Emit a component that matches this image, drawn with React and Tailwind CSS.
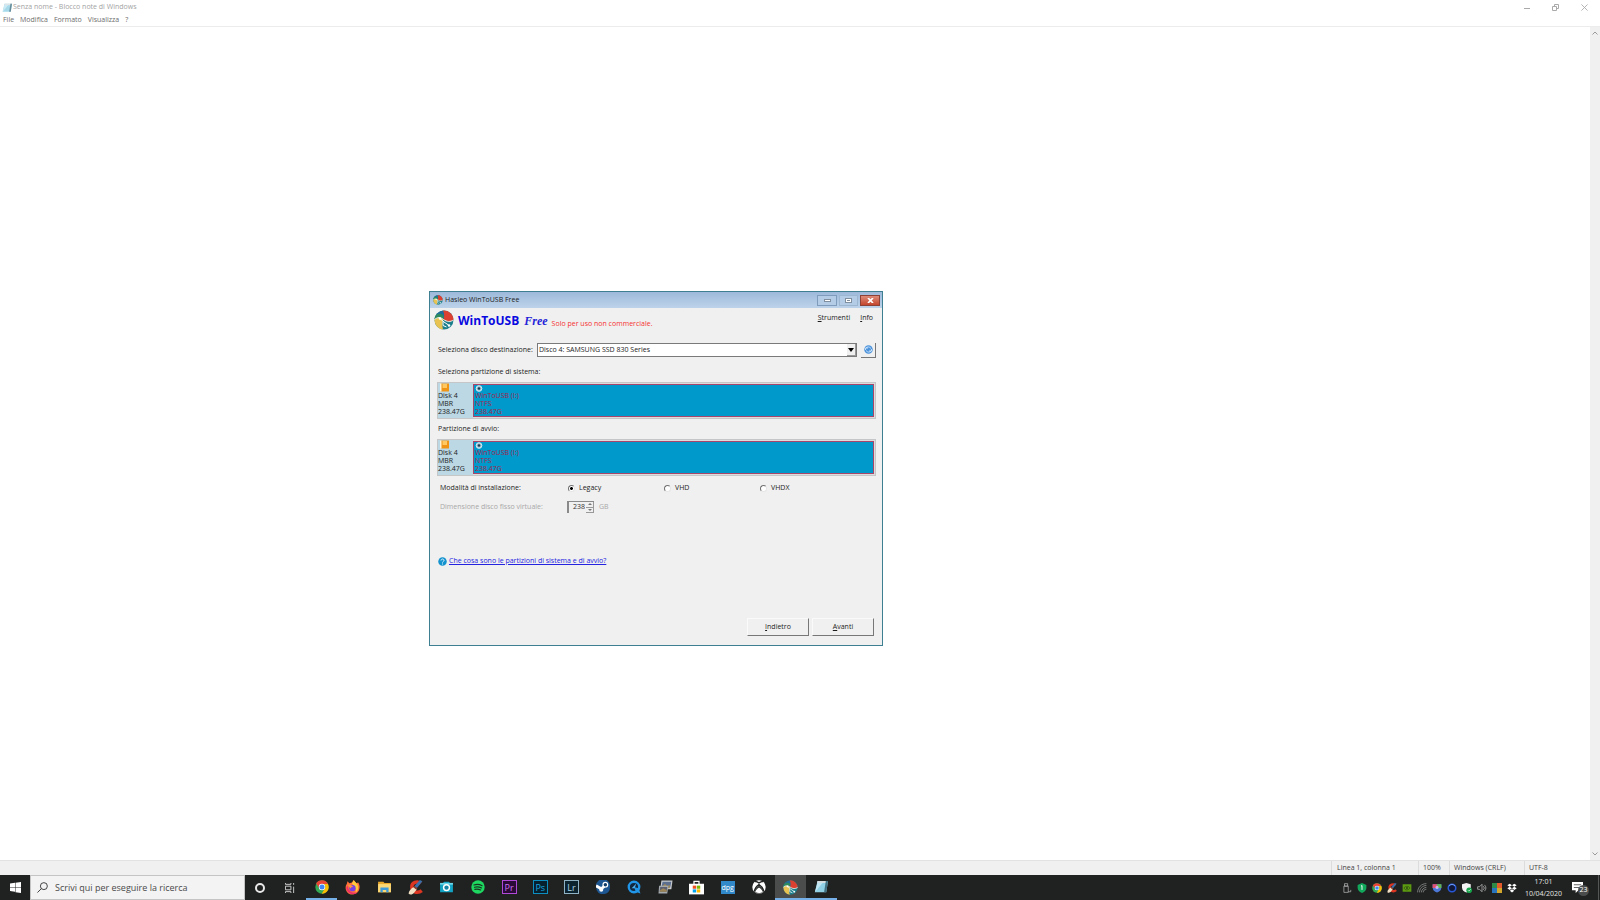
import React, { useState } from 'react';

const NotepadIcon = ({ className }) => (
  <svg viewBox="0 0 16 16" className={className} aria-hidden="true">
    <path d="M4 1h12l-2 13H1z" fill="#8fd0e6" />
    <path d="M4 1h12l-.5 2.500h-12z" fill="#d5dde0" />
    <path d="M16 1l-2 13h-2.500l2-13z" fill="#3f6f80" />
    <path d="M1 14l9-11H4z" fill="#bfe6f2" />
  </svg>
);

const WinToUsbIcon = ({ className }) => (
  <svg viewBox="0 0 40 40" className={className} aria-hidden="true">
    <circle cx="20" cy="20" r="19" fill="#1d7f8c" />
    <path d="M18 1A19 19 0 0 0 1 19c6-5 12-5 18 0 2-6 2-12-1-18z" fill="#1f6c9c" />
    <path d="M5 9c6-3 11-2 14 2v8C13 14 7 14 1 19c0-4 1-7 4-10z" fill="#2e8a5e" />
    <path d="M18 1c3 6 3 12 1 18 7 5 14 5 20 1A19 19 0 0 0 18 1z" fill="#db4030" />
    <path d="M1 19c6-5 12-5 18 0-3 6-3 12-1 20A19 19 0 0 1 1 19z" fill="#e9c352" />
    <path d="M1 19c6-5 12-5 18 0 7 5 14 5 20 1" stroke="#f3f3ea" strokeWidth="2" fill="none" />
    <path d="M12 17l8 7 9 6M18 23v8l7 3" stroke="#fff" strokeWidth="2" fill="none" />
    <circle cx="12" cy="17" r="2.500" fill="#fff" />
    <circle cx="30" cy="31" r="2.500" fill="#fff" />
  </svg>
);

const ChromeIcon = ({ className }) => (
  <svg viewBox="0 0 24 24" className={className} aria-hidden="true">
    <circle cx="12" cy="12" r="11.500" fill="#34a853" />
    <path d="M2 6.200A11.500 11.500 0 0 1 22.300 7H12a5 5 0 0 0-4.600 7z" fill="#ea4335" />
    <path d="M22.300 7A11.500 11.500 0 0 1 11.500 23.500l5-8.500A5.500 5.500 0 0 0 15 7z" fill="#fbbc05" />
    <circle cx="12" cy="12" r="5.500" fill="#fff" />
    <circle cx="12" cy="12" r="4.300" fill="#4285f4" />
  </svg>
);

const FirefoxIcon = ({ className }) => (
  <svg viewBox="0 0 24 24" className={className} aria-hidden="true">
    <path d="M3 6l1-4 3 3 4-1 3-4c1 3 3 3 4 5l3-1c3 4 3 9 1 13-3 6-12 8-17 4C0 17 0 10 3 6z" fill="#ff7139" />
    <path d="M14 0c1 3 6 5 7 10 1 4-1 8-4 10 1-5 0-10-6-14z" fill="#ffc93c" />
    <path d="M2 12c0 9 11 14 18 8-5 1-14 1-16-11z" fill="#ee2f69" />
    <circle cx="12" cy="13" r="5" fill="#7542e5" />
    <path d="M5 8c4-1 6 1 8 3-3 0-4 1-4 3z" fill="#ff9640" />
  </svg>
);

const FolderIcon = ({ className }) => (
  <svg viewBox="0 0 24 24" className={className} aria-hidden="true">
    <path d="M1 3h9l2 2h11v16H1z" fill="#e8a92c" />
    <path d="M1 7h22v14H1z" fill="#fbd877" />
    <path d="M5 21v-8h14v8h-4v-4H9v4z" fill="#3d9bdc" />
  </svg>
);

const CCleanerIcon = ({ className }) => (
  <svg viewBox="0 0 24 24" className={className} aria-hidden="true">
    <path d="M20 5.500C15 1 6 4 6 11c0 9 10 11 16 6" stroke="#dc3522" strokeWidth="5.500" fill="none" />
    <path d="M19 0l4 2-9 11-4-3z" fill="#3a6ea8" />
    <path d="M9 11l5 4-4 5c-3 4-7 4-9 2 0-4 3-8 8-11z" fill="#f1dfc4" />
    <path d="M10 9l5 4-1.500 2.500-5-4z" fill="#8a3b2c" />
  </svg>
);

const CameraIcon = ({ className }) => (
  <svg viewBox="0 0 24 24" className={className} aria-hidden="true">
    <path d="M1 5h5l2-2h8l2 2h5v16H1z" fill="#13a3c4" />
    <path d="M1 5h22v3H1z" fill="#6fd6ea" />
    <circle cx="12" cy="13" r="5" fill="#1483a5" stroke="#fff" strokeWidth="2.500" />
  </svg>
);

const SpotifyIcon = ({ className }) => (
  <svg viewBox="0 0 24 24" className={className} aria-hidden="true">
    <circle cx="12" cy="12" r="11.500" fill="#1ed760" />
    <path d="M5 8.500c5-1.500 10-1 14 1.200M6 12.500c4-1.200 8-.8 12 1.200M6.500 16c4-1 7-.5 10 1" stroke="#17341f" strokeWidth="2" fill="none" strokeLinecap="round" />
  </svg>
);

const AdobeIcon = ({ label, className }) => (
  <span className={`flex h-[14px] w-[15px] items-center justify-center border text-[9px] leading-none ${className}`}>{label}</span>
);

const SteamIcon = ({ className }) => (
  <svg viewBox="0 0 24 24" className={className} aria-hidden="true">
    <path d="M0 9A12 12 0 0 1 24 12 12 12 0 0 1 1 17z" fill="#1d5690" />
    <path d="M0 10l9 5 6-5" stroke="#fff" strokeWidth="5" fill="none" />
    <circle cx="16" cy="8" r="4" fill="#123c68" stroke="#fff" strokeWidth="2" />
    <circle cx="9" cy="16.500" r="3.500" fill="#fff" />
  </svg>
);

const QuickTimeIcon = ({ className }) => (
  <svg viewBox="0 0 24 24" className={className} aria-hidden="true">
    <circle cx="12" cy="12" r="9" fill="#12283e" stroke="#2196e8" strokeWidth="4" />
    <path d="M12 12l8 2 3 9-8-3z" fill="#2196e8" />
    <path d="M8 14l8-8-3 8z" fill="#4db4f5" />
  </svg>
);

const PhotosIcon = ({ className }) => (
  <svg viewBox="0 0 24 24" className={className} aria-hidden="true">
    <path d="M5 1h19l-2 15H3z" fill="#c8ccd0" />
    <path d="M7 3h15l-2 10H5z" fill="#5c6f8f" />
    <path d="M6 11l5-4 4 3 5-1-1 5H5z" fill="#a08a58" />
    <path d="M1 10h16l-2 13H0z" fill="#a3a8ad" />
    <path d="M3 12h12l-1 8H2z" fill="#5b5f70" />
    <path d="M3 17l5-3 6 3v3H2z" fill="#9b8455" />
  </svg>
);

const StoreIcon = ({ className }) => (
  <svg viewBox="0 0 24 24" className={className} aria-hidden="true">
    <path d="M8 7V2h8v5" stroke="#fff" strokeWidth="2" fill="none" />
    <path d="M0 6h24v17H0z" fill="#fff" />
    <path d="M6 9h5.500v5H6z" fill="#f25022" />
    <path d="M12.500 9H18v5h-5.500z" fill="#7fba00" />
    <path d="M6 15h5.500v5H6z" fill="#00a4ef" />
    <path d="M12.500 15H18v5h-5.500z" fill="#ffb900" />
  </svg>
);

const DpgIcon = () => (
  <span className="flex h-[13px] w-[14px] items-center justify-center overflow-hidden bg-[#3189c9] text-[7px] leading-none text-white">dpg</span>
);

const XboxIcon = ({ className }) => (
  <svg viewBox="0 0 24 24" className={className} aria-hidden="true">
    <circle cx="12" cy="12" r="11.500" fill="#fff" />
    <path d="M5 2.500c3-.5 5 1 7 2.500 2-1.500 4-3 7-2.500M4 20C5 14 9 10 12 8c3 2 7 6 8 12" stroke="#202221" strokeWidth="2.500" fill="none" />
    <path d="M4.500 20C6 15 9 12 12 10c3 2 6 5 7.500 10-4 4-11 4-15 0z" fill="#202221" />
    <path d="M5.500 20c2-3 4-6 6.500-7 2.500 1 4.500 4 6.500 7-4 3.300-9 3.300-13 0z" fill="#fff" />
  </svg>
);

const WindowsIcon = ({ className }) => (
  <svg viewBox="0 0 22 22" className={className} aria-hidden="true">
    <path d="M0 3l10-1.500V10H0zM11 1.300L22 0v10H11zM0 11h10v8.500L0 18zM11 11h11v11l-11-1.500z" fill="#fff" />
  </svg>
);

const taskbarApps = [
  { name: 'Google Chrome', icon: <ChromeIcon className="h-[14px] w-[14px]" />, state: 'open' },
  { name: 'Firefox', icon: <FirefoxIcon className="h-[15px] w-[15px]" /> },
  { name: 'Esplora file', icon: <FolderIcon className="h-[14px] w-[15px]" /> },
  { name: 'CCleaner', icon: <CCleanerIcon className="h-[15px] w-[15px]" /> },
  { name: 'Fotocamera', icon: <CameraIcon className="h-[14px] w-[15px]" /> },
  { name: 'Spotify', icon: <SpotifyIcon className="h-[14px] w-[14px]" /> },
  { name: 'Premiere Pro', icon: <AdobeIcon label="Pr" className="border-[#b048d8] bg-[#2a0a36] text-[#d070f5]" /> },
  { name: 'Photoshop', icon: <AdobeIcon label="Ps" className="border-[#0c8fc0] bg-[#06202e] text-[#18a8e0]" /> },
  { name: 'Lightroom', icon: <AdobeIcon label="Lr" className="border-[#8fb2c4] bg-[#0c2430] text-[#b0d4e8]" /> },
  { name: 'Steam', icon: <SteamIcon className="h-[14px] w-[14px]" /> },
  { name: 'QuickTime', icon: <QuickTimeIcon className="h-[14px] w-[14px]" /> },
  { name: 'Foto', icon: <PhotosIcon className="h-[14px] w-[15px]" /> },
  { name: 'Microsoft Store', icon: <StoreIcon className="h-[15px] w-[15px]" /> },
  { name: 'DPG', icon: <DpgIcon /> },
  { name: 'Xbox', icon: <XboxIcon className="h-[14px] w-[14px]" /> },
  { name: 'WinToUSB', icon: <WinToUsbIcon className="h-[15px] w-[15px]" />, state: 'active' },
  { name: 'Blocco note', icon: <NotepadIcon className="h-[14px] w-[14px]" />, state: 'open' },
];

const appStates = {
  open: 'border-[#76b0e8]',
  active: 'border-[#76b0e8] bg-[#4b4d4c]',
};

const trayIcons = [
  { name: 'Rimozione hardware', art: <path d="M4 1h5v4H4zM3 5h7v10H3zM10 14h4v-3" stroke="#c9c9c9" fill="none" /> },
  { name: 'Sicurezza', art: <><path d="M8 0l7 3v5c0 4-4 7-7 8-3-1-7-4-7-8V3z" fill="#12a85c" /><path d="M6.500 5L8 4v7" stroke="#fff" strokeWidth="1.500" fill="none" /></> },
  { name: 'Chrome', art: <ChromeIcon /> },
  { name: 'CCleaner', art: <CCleanerIcon /> },
  { name: 'NVIDIA', art: <><path d="M1 2h14v12H1z" fill="#5d9c12" /><path d="M3 8c3-4 8-3 10 0-3 4-8 4-10 0z" stroke="#294010" fill="none" /><circle cx="8" cy="8" r="1.500" fill="#294010" /></> },
  { name: 'Rete', art: <path d="M1 15C1 7 7 1 15 1M4 15C4 9 9 4 15 4M7 15c0-4 4-8 8-8M10 15c0-3 2-5 5-5" stroke="#a9abaa" fill="none" /> },
  { name: 'Protezione', art: <><path d="M1 2h14v5c0 4-3 7-7 8-4-1-7-4-7-8z" fill="#4c78d8" /><path d="M1 2h7v6H1z" fill="#e34f6f" /><path d="M8 2h7v6H8z" fill="#65b84e" /><circle cx="8" cy="7" r="2.500" fill="#c9b7f0" /></> },
  { name: 'Cortana', art: <><circle cx="8" cy="8" r="6" stroke="#2857d8" strokeWidth="2.500" fill="#10183a" /><path d="M3 5a6 6 0 0 1 10 0" stroke="#6f9df5" strokeWidth="1.500" fill="none" /></> },
  { name: 'Windows Defender', art: <><path d="M7 0l7 2v5c0 4-3 7-7 8-4-1-7-4-7-8V2z" fill="#f3f3f3" /><circle cx="11.500" cy="11.500" r="4.500" fill="#16a34a" /><path d="M9.500 11.500l1.500 1.500 3-3" stroke="#fff" fill="none" /></> },
  { name: 'Volume', art: <><path d="M1 6h3l4-4v12l-4-4H1z" stroke="#d5d5d5" fill="none" /><path d="M10 5c2 2 2 4 0 6M12 3c3 3 3 7 0 10" stroke="#d5d5d5" fill="none" /></> },
  { name: 'Office', art: <><path d="M0 0h8v8H0z" fill="#2f8a48" /><path d="M8 0h8v8H8z" fill="#e55a2a" /><path d="M0 8h8v8H0z" fill="#2874bd" /><path d="M8 8h8v8H8z" fill="#d3a72c" /></> },
  { name: 'Dropbox', art: <path d="M4.300 1L8 3.500 4.300 6 .5 3.500zM11.700 1l3.800 2.500L11.700 6 8 3.500zM4.300 6L8 8.500 4.300 11 .5 8.500zM11.700 6l3.800 2.500-3.800 2.500L8 8.500zM8 10l3.500 2.500L8 15l-3.500-2.500z" fill="#fff" /> },
];

const Notepad = () => (
  <main className="flex min-h-0 flex-1 flex-col bg-white text-[7px]">
    <header className="border-b border-[#ececec]">
      <div className="flex h-[15px] items-center text-[#a3a3a3]">
        <NotepadIcon className="ml-[2px] h-[10px] w-[10px] opacity-80" />
        <h1 className="ml-px flex-1">Senza nome - Blocco note di Windows</h1>
        <div className="mr-px flex text-[#aaaaaa]">
          <button aria-label="Riduci a icona" className="flex h-[14px] w-[29px] items-center justify-center">
            <svg viewBox="0 0 6 6" className="h-[6px] w-[6px]"><path d="M0 3.500h6" stroke="currentColor" /></svg>
          </button>
          <button aria-label="Ripristina" className="flex h-[14px] w-[29px] items-center justify-center">
            <svg viewBox="0 0 7 7" className="h-[7px] w-[7px]"><path d="M.5 2.500h4v4h-4zM2.500 2V.5h4v4H5" stroke="currentColor" fill="none" /></svg>
          </button>
          <button aria-label="Chiudi" className="flex h-[14px] w-[29px] items-center justify-center">
            <svg viewBox="0 0 8 8" className="h-[7px] w-[7px]"><path d="M.5.5l7 7M7.500.5l-7 7" stroke="currentColor" /></svg>
          </button>
        </div>
      </div>
      <nav className="flex h-[11px] items-center gap-[6px] pl-[3px] text-[#6d6d6d]">
        <button>File</button>
        <button>Modifica</button>
        <button>Formato</button>
        <button>Visualizza</button>
        <button>?</button>
      </nav>
    </header>
    <div className="flex min-h-0 flex-1">
      <textarea aria-label="Documento" className="flex-1 resize-none outline-none" />
      <div className="flex w-[10px] flex-col items-center justify-between bg-[#f0f0f0] py-[4px] text-[#9a9a9a]">
        <svg viewBox="0 0 6 4" className="h-[4px] w-[6px]"><path d="M.5 3.500L3 1l2.500 2.500" stroke="currentColor" fill="none" /></svg>
        <svg viewBox="0 0 6 4" className="h-[4px] w-[6px]"><path d="M.5.5L3 3 5.500.5" stroke="currentColor" fill="none" /></svg>
      </div>
    </div>
    <footer className="flex h-[15px] justify-end border-t border-[#e2e2e2] bg-[#f0f0f0] text-[#444444]">
      <span className="flex w-[87px] items-center border-l border-[#dcdcdc] pl-[5px]">Linea 1, colonna 1</span>
      <span className="flex w-[31px] items-center border-l border-[#dcdcdc] pl-[4px]">100%</span>
      <span className="flex w-[75px] items-center border-l border-[#dcdcdc] pl-[4px]">Windows (CRLF)</span>
      <span className="flex w-[76px] items-center border-l border-[#dcdcdc] pl-[4px]">UTF-8</span>
    </footer>
  </main>
);

const PartitionBar = () => (
  <div className="flex h-[37px] border border-[#c4c6c8] bg-[#dcdcdc] leading-[8px]">
    <div className="w-[35px] bg-[#bcd8e4]">
      <svg viewBox="0 0 18 18" className="ml-[2px] h-[9px] w-[9px]" aria-hidden="true">
        <path d="M1 1h17v16H1z" fill="#ef9414" />
        <path d="M5 2h9v8H5z" fill="#ffc861" />
        <path d="M0 1h3v16H0z" fill="#fff3d8" />
      </svg>
      <p>Disk 4<br />MBR<br />238.47G</p>
    </div>
    <div className="my-px mr-px flex-1 border border-[#a8456a] bg-[#0099cc] text-[#a4244a]">
      <svg viewBox="0 0 16 16" className="ml-px h-[7px] w-[8px]" aria-hidden="true">
        <circle cx="8" cy="8" r="6.500" fill="#9cc6da" stroke="#e5eef2" strokeWidth="2" />
        <circle cx="8" cy="8" r="3" fill="#1c3c50" />
      </svg>
      <p className="pl-px">WinToUSB (I:)<br />NTFS<br />238.47G</p>
    </div>
  </div>
);

const modes = ['Legacy', 'VHD', 'VHDX'];

const WinToUsbDialog = () => {
  const [mode, setMode] = useState('Legacy');
  const [size, setSize] = useState(238);

  return (
    <section className="absolute left-[429px] top-[291px] w-[454px] border border-[#3f7f92] bg-[#f0f0f0] text-[7px] text-[#1c1c1c]">
      <div className="flex h-[16px] items-center bg-linear-to-b from-[#9db9da] to-[#bdd3ea] pl-[3px] pr-[2px]">
        <WinToUsbIcon className="h-[10px] w-[10px]" />
        <h2 className="ml-[2px] flex-1">Hasleo WinToUSB Free</h2>
        <button aria-label="Riduci a icona" className="flex h-[11px] w-[20px] items-center justify-center border border-[#7f9cbd] bg-[#b5cce6]">
          <span className="h-[3px] w-[7px] border border-[#7f8fa0] bg-white" />
        </button>
        <button aria-label="Ingrandisci" className="ml-[2px] flex h-[11px] w-[19px] items-center justify-center border border-[#9db6d2] bg-[#b5cce6]">
          <span className="flex h-[5px] w-[7px] items-center justify-center border border-[#7f8fa0] bg-white">
            <span className="h-px w-[3px] bg-[#7f8fa0]" />
          </span>
        </button>
        <button aria-label="Chiudi" className="ml-[2px] flex h-[11px] w-[20px] items-center justify-center border border-[#8d4237] bg-linear-to-b from-[#dd8a78] to-[#c4452c] text-white">
          <svg viewBox="0 0 8 6" className="h-[5px] w-[7px]"><path d="M1 0l6 6M7 0L1 6" stroke="currentColor" strokeWidth="2" /></svg>
        </button>
      </div>
      <div className="pb-[9px] pl-[7px] pr-[6px]">
        <div className="-ml-[3px] flex h-[26px] items-center">
          <WinToUsbIcon className="mb-[2px] h-[20px] w-[20px]" />
          <strong className="ml-[4px] text-[12px] leading-none text-[#0808e0]">WinToUSB</strong>
          <em className="ml-[5px] font-['Liberation_Serif',serif] text-[12px] font-bold leading-none text-[#2424d8]">Free</em>
          <span className="ml-[4px] mt-[6px] flex-1 text-[#f53030]">Solo per uso non commerciale.</span>
          <nav className="mb-[6px] mr-[3px] flex gap-[10px]">
            <button><u>S</u>trumenti</button>
            <button><u>I</u>nfo</button>
          </nav>
        </div>
        <div className="mt-[8px] flex h-[16px] items-center pl-px">
          <label htmlFor="disk" className="w-[99px]">Seleziona disco destinazione:</label>
          <div className="flex h-[14px] flex-1 border border-[#7a7a7a] bg-white">
            <select id="disk" className="flex-1 appearance-none pl-px outline-none">
              <option>Disco 4: SAMSUNG SSD 830 Series</option>
            </select>
            <span className="pointer-events-none flex w-[9px] items-center justify-center border-b border-r border-[#9a9a9a] bg-[#f0f0f0]">
              <svg viewBox="0 0 6 4" className="h-[4px] w-[6px]"><path d="M0 0h6L3 4z" fill="#000" /></svg>
            </span>
          </div>
          <button aria-label="Aggiorna" className="ml-[4px] flex h-[15px] w-[15px] items-center justify-center border-b border-r border-[#777777]">
            <svg viewBox="0 0 18 18" className="h-[9px] w-[9px]">
              <circle cx="9" cy="9" r="8.500" fill="#4c93dc" />
              <path d="M3 10V6h5M15 8v4h-5M4 6c3-3 7-3 10 1M14 12c-3 3-7 3-10-1" stroke="#e4f1ff" strokeWidth="1.500" fill="none" />
            </svg>
          </button>
        </div>
        <h3 className="mt-[9px] pl-px leading-[10px]">Seleziona partizione di sistema:</h3>
        <div className="mt-[5px]"><PartitionBar /></div>
        <h3 className="mt-[5px] pl-px leading-[10px]">Partizione di avvio:</h3>
        <div className="mt-[5px]"><PartitionBar /></div>
        <fieldset className="mt-[7px] flex h-[10px] items-center pl-[3px]">
          <legend className="float-left w-[128px]">Modalità di installazione:</legend>
          {modes.map((m) => (
            <label key={m} className="flex w-[96px] items-center gap-[4px]">
              <input
                type="radio"
                name="mode"
                value={m}
                checked={mode === m}
                onChange={() => setMode(m)}
                className="h-[7px] w-[7px] appearance-none rounded-full border border-b-[#e6e6e6] border-l-[#707070] border-r-[#e6e6e6] border-t-[#707070] bg-white checked:bg-[radial-gradient(#000_0_35%,#fff_45%)]"
              />
              {m}
            </label>
          ))}
        </fieldset>
        <div className="mt-[7px] flex h-[14px] items-center pl-[3px] text-[#a8a8a8]">
          <label htmlFor="size" className="w-[127px]">Dimensione disco fisso virtuale:</label>
          <div className="flex h-[12px] w-[27px] border-l-2 border-t border-[#8a8a8a] text-[#333333]">
            <input
              id="size"
              type="number"
              value={size}
              onChange={(e) => setSize(Number(e.target.value))}
              className="w-[17px] appearance-none pr-px text-right outline-none [&::-webkit-inner-spin-button]:hidden"
            />
            <div className="flex flex-1 flex-col">
              <button aria-label="Aumenta" onClick={() => setSize(size + 1)} className="flex flex-1 items-center justify-center border-b border-r border-[#999999]">
                <svg viewBox="0 0 4 2" className="h-[2px] w-[4px]"><path d="M0 2h4L2 0z" fill="#777" /></svg>
              </button>
              <button aria-label="Diminuisci" onClick={() => setSize(size - 1)} className="flex flex-1 items-center justify-center border-b border-r border-[#999999]">
                <svg viewBox="0 0 4 2" className="h-[2px] w-[4px]"><path d="M0 0h4L2 2z" fill="#777" /></svg>
              </button>
            </div>
          </div>
          <span className="ml-[5px]">GB</span>
        </div>
        <div className="mt-[42px] flex h-[10px] items-center gap-[2px] pl-px">
          <svg viewBox="0 0 18 18" className="h-[9px] w-[9px]" aria-hidden="true">
            <circle cx="9" cy="9" r="8.500" fill="#1593cf" />
            <path d="M6 7c0-4 6-4 6 0 0 2-3 2-3 4M9 13v2" stroke="#e4f6ff" strokeWidth="2" fill="none" />
          </svg>
          <a href="#partizioni" className="text-[#2424e0] underline">Che cosa sono le partizioni di sistema e di avvio?</a>
        </div>
        <div className="mt-[52px] flex justify-end gap-[3px] pr-[2px]">
          <button className="h-[18px] w-[62px] border border-b-[#777777] border-l-[#fafafa] border-r-[#777777] border-t-[#fafafa]"><u>I</u>ndietro</button>
          <button className="h-[18px] w-[62px] border border-b-[#777777] border-l-[#fafafa] border-r-[#777777] border-t-[#fafafa]"><u>A</u>vanti</button>
        </div>
      </div>
    </section>
  );
};

const Taskbar = () => (
  <footer className="flex h-[25px] bg-[#202221] text-white">
    <button aria-label="Start" className="flex w-[30px] items-center justify-center">
      <WindowsIcon className="h-[11px] w-[11px]" />
    </button>
    <label className="flex w-[215px] items-center border border-[#c4c4c4] bg-[#f3f3f3] pl-[6px]">
      <svg viewBox="0 0 12 12" className="h-[11px] w-[11px]" aria-hidden="true">
        <circle cx="7.500" cy="4.500" r="3.800" stroke="#333" fill="none" />
        <path d="M4.700 7.300L.5 11.500" stroke="#333" />
      </svg>
      <input type="text" aria-label="Cerca" placeholder="Scrivi qui per eseguire la ricerca" className="ml-[7px] flex-1 text-[9px] outline-none placeholder:text-[#4a4a4a]" />
    </label>
    <button aria-label="Cortana" className="flex w-[30px] items-center justify-center">
      <span className="h-[10px] w-[10px] rounded-full border-2 border-[#e8e8e8]" />
    </button>
    <button aria-label="Visualizzazione attività" className="flex w-[30px] items-center justify-center">
      <svg viewBox="0 0 11 11" className="h-[10px] w-[10px]"><path d="M.5 0v1.500h6V0M.5 3.500h6v4h-6zM.5 11V9.500h6V11M9.500 0v2M9.500 4v7" stroke="#d5d5d5" fill="none" /></svg>
    </button>
    <nav className="ml-px flex w-[531px]">
      {taskbarApps.map((app) => (
        <button key={app.name} aria-label={app.name} className={`flex flex-1 items-center justify-center border-b-2 pt-px ${appStates[app.state] || 'border-transparent'}`}>
          {app.icon}
        </button>
      ))}
    </nav>
    <div className="ml-auto flex items-center">
      {trayIcons.map((item) => (
        <button key={item.name} aria-label={item.name} className="flex w-[15px] justify-center">
          <svg viewBox="0 0 16 16" className="h-[10px] w-[10px]">{item.art}</svg>
        </button>
      ))}
      <time className="w-[49px] text-center text-[7px] leading-[12px] text-[#e4e4e4]">17:01<br />10/04/2020</time>
      <button aria-label="Notifiche" className="relative ml-[4px] mr-[9px] h-[16px] w-[17px]">
        <svg viewBox="0 0 12 12" className="h-[11px] w-[11px]"><path d="M0 0h12v9H7l-3 3V9H0z" fill="#fff" /><path d="M2 3h8M2 6h6" stroke="#555" /></svg>
        <span className="absolute bottom-0 right-0 flex h-[11px] w-[11px] items-center justify-center rounded-full bg-[#4a4c4b] text-[7px]">23</span>
      </button>
      <span className="mr-px h-[25px] w-px bg-[#555555]" />
    </div>
  </footer>
);

const App = () => {
  return (
    <div className="relative flex h-screen flex-col overflow-hidden font-['Open_Sans','Noto_Sans',sans-serif]">
      <Notepad />
      <WinToUsbDialog />
      <Taskbar />
    </div>
  );
};

export default App;
